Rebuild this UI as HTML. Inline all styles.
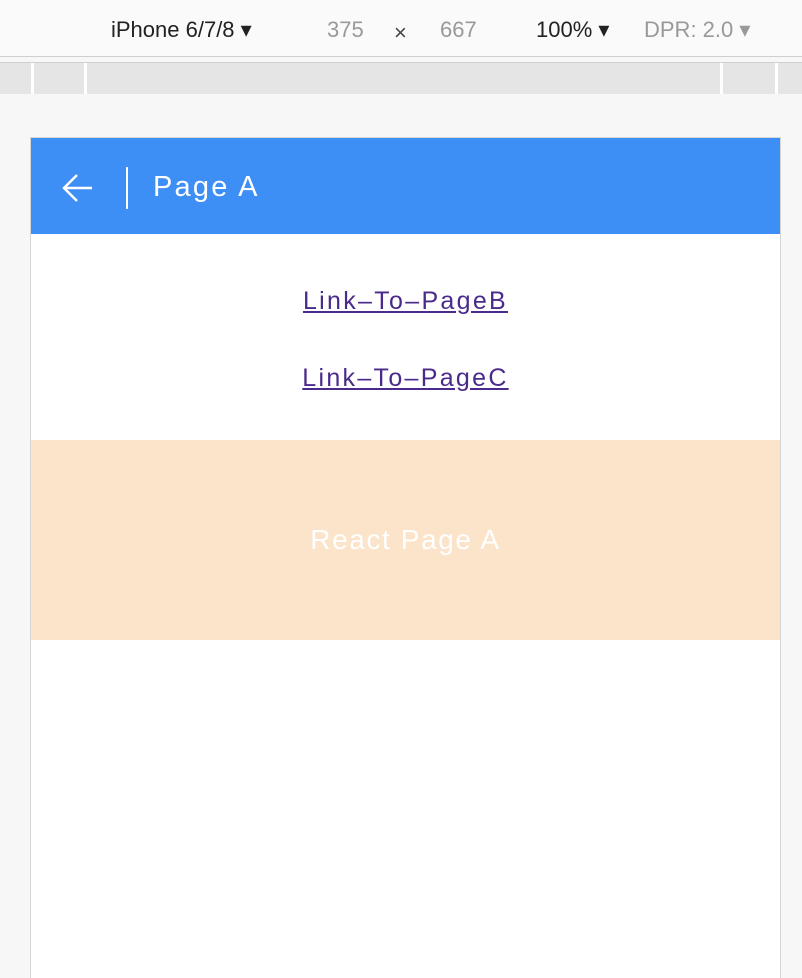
<!DOCTYPE html>
<html><head><meta charset="utf-8"><style>
html,body{margin:0;padding:0}
body{width:802px;height:972px;background:#f7f7f7;position:relative;overflow:hidden;font-family:"Liberation Sans",sans-serif}
.top{position:absolute;left:0;top:0;width:802px;height:56px;background:#fafafa;border-bottom:1px solid #cfcfcf}
.top span{position:absolute;top:17px;font-size:22px;line-height:26px}
.strip{position:absolute;left:0;top:62px;width:802px;height:31px;background:#e5e5e5;border-top:1px solid #d0d0d0}
.strip i{position:absolute;top:0;width:3px;height:31px;background:#fff}
.phone{position:absolute;left:30px;top:137px;width:749px;height:840px;background:#fff;border:1px solid #d6d6d6;border-bottom:none}
.hdr{position:absolute;left:0;top:0;width:749px;height:96px;background:#3e8ff5}
.hdr .bar{position:absolute;left:95px;top:29px;width:2px;height:42px;background:#fff}
.hdr .t{position:absolute;left:122px;top:32px;color:#fff;font-size:29px;line-height:34px;letter-spacing:2.2px}
.lk{position:absolute;left:0;width:749px;text-align:center;font-size:25px;line-height:30px;letter-spacing:2.3px}
.lk a{color:#4a2a8a;text-decoration:underline}
.band{position:absolute;left:0;top:302px;width:749px;height:200px;background:#fbe4c9;color:#fff;font-size:28px;text-align:center;line-height:200px;letter-spacing:1.6px}
</style></head><body>
<div class="top">
<span style="left:111px;color:#222">iPhone 6/7/8 ▾</span>
<span style="left:327px;color:#999">375</span>
<span style="left:394px;color:#444;top:20px">×</span>
<span style="left:440px;color:#999">667</span>
<span style="left:536px;color:#222">100% ▾</span>
<span style="left:644px;color:#999">DPR: 2.0 ▾</span>
</div>
<div class="strip"><i style="left:31px"></i><i style="left:84px"></i><i style="left:720px"></i><i style="left:775px"></i></div>
<div class="phone">
<div class="hdr">
<svg style="position:absolute;left:31px;top:35px" width="32" height="30" viewBox="0 0 32 30"><path d="M30 15H3M15 2L2 15L15 28" stroke="#fff" stroke-width="2.5" fill="none"/></svg>
<div class="bar"></div>
<div class="t">Page A</div>
</div>
<div class="lk" style="top:148px"><a>Link–To–PageB</a></div>
<div class="lk" style="top:225px"><a>Link–To–PageC</a></div>
<div class="band">React Page A</div>
</div>
</body></html>
